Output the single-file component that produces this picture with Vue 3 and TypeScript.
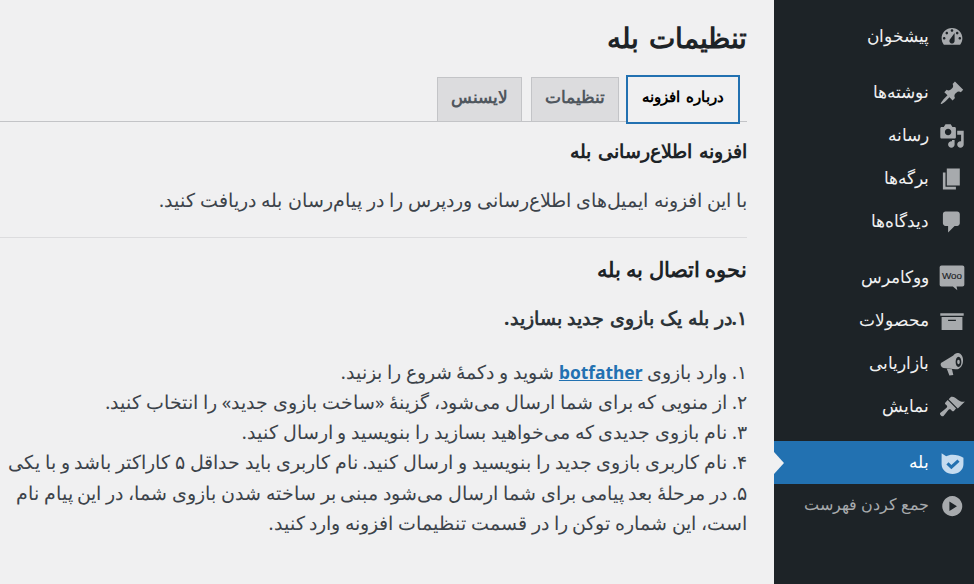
<script setup lang="ts">
interface Item { label: string; icon: string; active?: boolean; muted?: boolean }
const groups: Item[][] = [
  [{ label: 'پیشخوان', icon: 'dash' }],
  [
    { label: 'نوشته‌ها', icon: 'pin' },
    { label: 'رسانه', icon: 'media' },
    { label: 'برگه‌ها', icon: 'page' },
    { label: 'دیدگاه‌ها', icon: 'comment' },
  ],
  [
    { label: 'ووکامرس', icon: 'woo' },
    { label: 'محصولات', icon: 'archive' },
    { label: 'بازاریابی', icon: 'mega' },
    { label: 'نمایش', icon: 'brush' },
  ],
  [
    { label: 'بله', icon: 'shield', active: true },
    { label: 'جمع کردن فهرست', icon: 'play', muted: true },
  ],
]
const paths: Record<string, string> = {
  dash: 'M3.76 16h12.48c1.1-1.37 1.76-3.11 1.76-5 0-4.42-3.58-8-8-8s-8 3.58-8 8c0 1.89.66 3.63 1.76 5zM10 4c.55 0 1 .45 1 1s-.45 1-1 1-1-.45-1-1 .45-1 1-1zM6 6c.55 0 1 .45 1 1s-.45 1-1 1-1-.45-1-1 .45-1 1-1zm8 0c.55 0 1 .45 1 1s-.45 1-1 1-1-.45-1-1 .45-1 1-1zm-5.37 5.55L12 7v6c0 1.1-.9 2-2 2s-2-.9-2-2c0-.57.24-1.08.63-1.45zM4 10c.55 0 1 .45 1 1s-.45 1-1 1-1-.45-1-1 .45-1 1-1zm12 0c.55 0 1 .45 1 1s-.45 1-1 1-1-.45-1-1 .45-1 1-1z',
  pin: 'M10.44 3.02l1.82-1.82 6.36 6.35-1.83 1.82c-1.05-.68-2.48-.57-3.41.36l-.75.75c-.92.93-1.04 2.35-.35 3.41l-1.83 1.82-2.41-2.41-2.8 2.79c-.42.42-3.38 2.71-3.8 2.29s1.86-3.39 2.28-3.81l2.79-2.79L4.1 9.36l1.83-1.82c1.05.69 2.48.57 3.4-.36l.75-.75c.93-.92 1.05-2.35.36-3.41z',
  media: 'M13 11V4c0-.55-.45-1-1-1h-1.67L9 1H5L3.67 3H2c-.55 0-1 .45-1 1v7c0 .55.45 1 1 1h10c.55 0 1-.45 1-1zM7 4.5c1.38 0 2.5 1.12 2.5 2.5S8.38 9.5 7 9.5 4.5 8.38 4.5 7 5.62 4.5 7 4.5zM14 6h5v10.5c0 1.38-1.12 2.5-2.5 2.5S14 17.88 14 16.5s1.12-2.5 2.5-2.5c.17 0 .34.02.5.05V9h-3V6zm-4 8.05V13h2v3.5c0 1.38-1.12 2.5-2.5 2.5S7 17.88 7 16.5 8.12 14 9.5 14c.17 0 .34.02.5.05z',
  page: 'M6 15V2h10v13H6zm-1 1h8v2H3V5h2v11z',
  comment: 'M5 2h9c1.1 0 2 .9 2 2v7c0 1.1-.9 2-2 2h-2l-5 5v-5H5c-1.1 0-2-.9-2-2V4c0-1.1.9-2 2-2z',
  archive: 'M19 4v2H1V4h18zM2 7h16v10H2V7zm11 3V9H7v1h6z',
  mega: 'M1.5 9.2L11 3.5C12 1.8 14 1.2 15.5 1.8 18 2.7 19 6 18.3 9.200 17.600 12.500 15 14.600 12.500 14L3.500 13C1.500 12.500.8 10.500 1.500 9.200zM6 13.600l4 .5 1 4.400-3 .3zM15 4.500c-1.300 0-2.200 1.700-2.200 4s.9 3.800 2.200 3.800 2.200-1.600 2.200-3.800-.9-4-2.200-4zM15 6.800c-.6 0-1 .7-1 1.700s.4 1.600 1 1.600 1-.6 1-1.600-.4-1.700-1-1.700z',
  brush: 'M14.48 11.06L7.41 3.99l1.5-1.5c.5-.56 2.3-.47 3.51.32 1.21.8 1.43 1.28 2.91 2.1 1.18.64 2.45 1.26 4.67.85l-5.52 5.3zm-.71.71L6.7 4.7 4.93 6.47c-.39.39-.39 1.02 0 1.41l1.06 1.06c.39.39.39 1.03 0 1.42-.6.6-1.43 1.15-2.21 1.93-.78.78-2.23 1.69-2.68 2.15-.46.45-.46 1.18 0 1.63l.77.77c.45.46 1.18.46 1.63 0 .46-.45 1.37-1.9 2.15-2.68.78-.78 1.33-1.61 1.93-2.21.39-.39 1.03-.39 1.42 0l1.06 1.06c.39.39 1.02.39 1.41 0l1.6-1.77z',
  play: 'M10.200 2.400a7.700 7.700 0 1 0 .001 0zM8 6.600v7.300l5.800-3.650z',
}
</script>

<template>
  <div class="page" dir="rtl">
    <nav class="sidebar">
      <ul v-for="(group, g) in groups" :key="g" class="group">
        <li v-for="item in group" :key="item.label" class="item" :class="{ active: item.active, muted: item.muted }">
          <svg v-if="item.icon === 'woo'" class="icon" viewBox="0 0 20 20">
            <path class="fill" d="M2 .3h16c1 0 1.500.6 1.500 1.500v13.200c0 1-.6 1.500-1.500 1.500h-4.500l.6 2.900-3.400-2.900H2c-1 0-1.500-.6-1.500-1.500V1.800C.5.900 1 .3 2 .3z" />
            <text x="10" y="11" text-anchor="middle" class="woo-text">Woo</text>
          </svg>
          <svg v-else-if="item.icon === 'shield'" class="icon" viewBox="0 0 20 20">
            <path class="shield" d="M2 2.500L5.500 4.800C6.800 4 8.500 3.600 10.500 3.600 13.500 3.600 16.500 4.500 18.800 6V11C18.800 15.300 15 18.500 10.500 18.500 6 18.500 2 15.300 2 11z" />
            <path class="tick" d="M6.500 10.300l3 2.800 5.500-5" />
          </svg>
          <svg v-else class="icon" viewBox="0 0 20 20">
            <path class="fill" fill-rule="evenodd" :d="paths[item.icon]" />
          </svg>
          <span class="label">{{ item.label }}</span>
          <span v-if="item.active" class="arrow"></span>
        </li>
      </ul>
    </nav>

    <main class="main">
      <h1 class="title">تنظیمات بله</h1>
      <div class="tabs">
        <a class="tab current">درباره افزونه</a>
        <a class="tab">تنظیمات</a>
        <a class="tab">لایسنس</a>
      </div>
      <h2 class="heading first">افزونه اطلاع‌رسانی بله</h2>
      <p class="lead">با این افزونه ایمیل‌های اطلاع‌رسانی وردپرس را در پیام‌رسان بله دریافت کنید.</p>
      <hr class="rule" />
      <h2 class="heading second">نحوه اتصال به بله</h2>
      <h3 class="sub">۱.در بله یک بازوی جدید بسازید.</h3>
      <p class="steps">
        ۱. وارد بازوی <a class="link">botfather</a> شوید و دکمهٔ شروع را بزنید.<br />
        ۲. از منویی که برای شما ارسال می‌شود، گزینهٔ «ساخت بازوی جدید» را انتخاب کنید.<br />
        ۳. نام بازوی جدیدی که می‌خواهید بسازید را بنویسید و ارسال کنید.<br />
        ۴. نام کاربری بازوی جدید را بنویسید و ارسال کنید. نام کاربری باید حداقل ۵ کاراکتر باشد و با یکی<br />
        ۵. در مرحلهٔ بعد پیامی برای شما ارسال می‌شود مبنی بر ساخته شدن بازوی شما، در این پیام نام<br />
        است، این شماره توکن را در قسمت تنظیمات افزونه وارد کنید.
      </p>
    </main>
  </div>
</template>

<style scoped>
.page {
  display: flex;
  width: 974px;
  height: 584px;
  overflow: hidden;
  background: #f0f0f1;
  color: #3c434a;
  font-family: "Noto Sans", sans-serif;
}
.sidebar {
  flex: 0 0 200px;
  background: #1d2327;
  padding-top: 15px;
  box-sizing: border-box;
}
.group {
  list-style: none;
  margin: 0 0 13px;
  padding: 0;
}
.item {
  position: relative;
  display: flex;
  align-items: center;
  gap: 10px;
  height: 43px;
  padding-right: 9px;
  box-sizing: border-box;
  color: #f0f0f1;
  font-size: 17.4px;
}
.label {
  margin-top: -3px;
}
.icon {
  flex: 0 0 26px;
  width: 26px;
  height: 26px;
  overflow: visible;
}
.fill { fill: #a7aaad; }
.woo-text {
  font-family: "Liberation Sans", sans-serif;
  font-size: 7.600px;
  stroke: #1d2327;
  stroke-width: .12;
  fill: #1d2327;
}
.active {
  background: #2271b1;
  color: #fff;
}
.shield { fill: #c5dcf0; }
.tick {
  fill: none;
  stroke: #2271b1;
  stroke-width: 2.400;
}
.muted {
  color: #a7aaad;
  font-size: 15.9px;
}
.arrow {
  position: absolute;
  left: 0;
  top: 50%;
  margin-top: -11px;
  border-style: solid;
  border-width: 11px 0 11px 10px;
  border-color: transparent transparent transparent #f0f0f1;
}
.main {
  flex: 1;
  min-width: 0;
  overflow: hidden;
  padding: 0 27px 0 0;
}
.title {
  margin: 0;
  padding-top: 18px;
  height: 75px;
  box-sizing: border-box;
  font-size: 28.2px;
  word-spacing: 3px;
  line-height: 38px;
  font-weight: 700;
  color: #1d2327;
}
.tabs {
  display: flex;
  gap: 9px;
  height: 47px;
  padding-right: 7px;
  box-sizing: border-box;
  border-bottom: 1px solid #c3c4c7;
}
.tab {
  height: 45px;
  margin-top: 2px;
  padding: 0 13px 7px;
  display: flex;
  align-items: center;
  box-sizing: border-box;
  background: #dcdcde;
  border: 1px solid #c3c4c7;
  color: #50575e;
  font-size: 16.7px;
  font-weight: 700;
}
.tab.current {
  height: 49px;
  margin-top: 0;
  margin-inline-end: -2px;
  padding: 0 14px 7px;
  background: #f0f0f1;
  border: 2px solid #2271b1;
  color: #000;
  font-size: 15.200px;
  word-spacing: 2px;
  position: relative;
}
.heading {
  margin: 0;
  font-size: 19.3px;
  line-height: 28px;
  font-weight: 700;
  color: #1d2327;
}
.heading.first {
  margin-top: 15px;
  word-spacing: 2px;
}
.lead {
  margin: 21px 0 0;
  font-size: 18.65px;
  word-spacing: .33px;
  line-height: 28px;
}
.rule {
  margin: 23px 0 0 -300px;
  border: 0;
  border-top: 1px solid #dcdcde;
}
.heading.second {
  margin-top: 17px;
  font-size: 20.5px;
}
.sub {
  margin: 21px 0 0;
  font-size: 19.3px;
  word-spacing: .8px;
  line-height: 28px;
  font-weight: 700;
  color: #2c3338;
}
.steps {
  margin: 24.500px 0 0;
  font-size: 18.65px;
  line-height: 30.300px;
  white-space: nowrap;
}
.link {
  color: #2271b1;
  font-size: 17.400px;
  font-weight: 700;
  text-decoration: underline;
}
</style>

<style>
html, body { margin: 0; background: #f0f0f1; }
</style>
